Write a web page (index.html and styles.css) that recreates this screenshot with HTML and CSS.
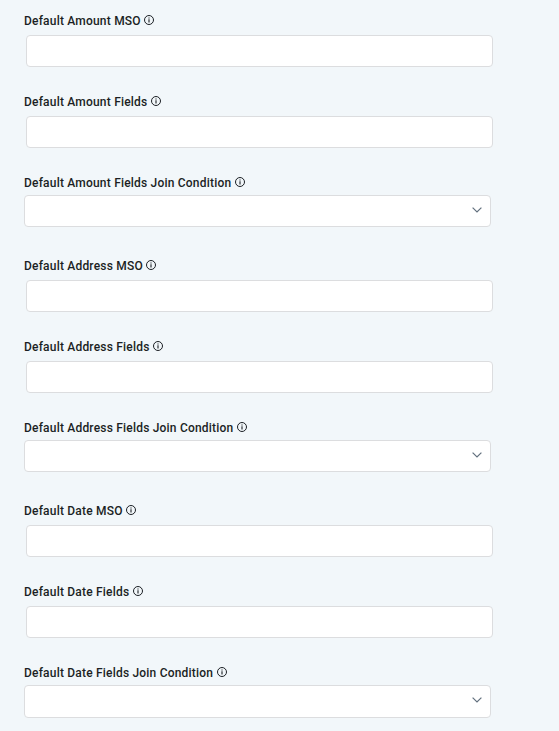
FILE: index.html
```html
<!DOCTYPE html>
<html lang="en">
<head>
	<meta charset="UTF-8">
	<title>Default Fields</title>
	<link rel="stylesheet" href="styles.css">
</head>
<body>
	<svg class="sprite">
		<symbol id="info" viewBox="0 0 10 10"><circle cx="5" cy="5" r="4.5" fill="none" stroke="currentColor"/><path d="M5 4.2v3.3M5 2.4v1.1" stroke="currentColor" stroke-width="1.1"/></symbol>
		<symbol id="arrow" viewBox="0 0 10 6"><path d="M.6.6 5 5 9.4.6" fill="none" stroke="currentColor" stroke-width="1.2"/></symbol>
	</svg>
	<form class="fields">
		<div class="field">
			<label for="amount-mso"><span>Default Amount MSO</span><svg class="info"><use href="#info"/></svg></label>
			<input id="amount-mso" type="text">
		</div>
		<div class="field">
			<label for="amount-fields"><span>Default Amount Fields</span><svg class="info"><use href="#info"/></svg></label>
			<input id="amount-fields" type="text">
		</div>
		<div class="field join">
			<label><span>Default Amount Fields Join Condition</span><svg class="info"><use href="#info"/></svg></label>
			<div class="select"><svg class="arrow"><use href="#arrow"/></svg></div>
		</div>
		<div class="field">
			<label for="address-mso"><span>Default Address MSO</span><svg class="info"><use href="#info"/></svg></label>
			<input id="address-mso" type="text">
		</div>
		<div class="field">
			<label for="address-fields"><span>Default Address Fields</span><svg class="info"><use href="#info"/></svg></label>
			<input id="address-fields" type="text">
		</div>
		<div class="field join">
			<label><span>Default Address Fields Join Condition</span><svg class="info"><use href="#info"/></svg></label>
			<div class="select"><svg class="arrow"><use href="#arrow"/></svg></div>
		</div>
		<div class="field">
			<label for="date-mso"><span>Default Date MSO</span><svg class="info"><use href="#info"/></svg></label>
			<input id="date-mso" type="text">
		</div>
		<div class="field">
			<label for="date-fields"><span>Default Date Fields</span><svg class="info"><use href="#info"/></svg></label>
			<input id="date-fields" type="text">
		</div>
		<div class="field join">
			<label><span>Default Date Fields Join Condition</span><svg class="info"><use href="#info"/></svg></label>
			<div class="select last"><svg class="arrow"><use href="#arrow"/></svg></div>
		</div>
	</form>
</body>
</html>
```
FILE: styles.css
```css
*{box-sizing:border-box;}
body{margin:0;background-color:#f2f7fa;color:#1b1f24;font:500 12px/16px Roboto,sans-serif;letter-spacing:.2px;overflow:hidden;}
.sprite{display:none;}
.fields{width:469px;margin:12px 0 0 24px;}
.field{height:81px;}
.join{height:83px;}
.field label{display:flex;align-items:flex-start;gap:3.5px;height:16px;}
.field label span{padding-top:1px;}
.info{width:10px;height:10px;margin-top:3px;}
.field input{display:block;width:467px;height:32px;margin:7px 0 0 2px;padding:0 10px;border:1px solid #dcdddf;border-radius:4px;background-color:#fff;}
.select{display:flex;align-items:center;justify-content:flex-end;width:467px;height:32px;margin-top:5px;padding:0 8px 3px 0;border:1px solid #dcdddf;border-radius:4px;background-color:#fff;}
.last{height:33px;}
.arrow{width:10px;height:6px;color:#62707e;}
```
